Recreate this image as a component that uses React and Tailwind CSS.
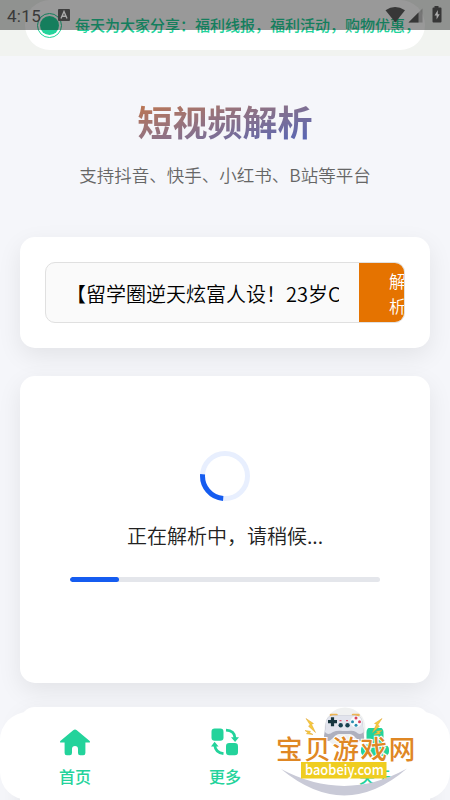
import React from 'react';

const HomeIcon = () => (
  <svg width="30" height="27" viewBox="0 0 30 27" fill="#23d39b">
    <path d="M13.2 1.2Q15 -.3 16.8 1.2L29.4 11.8Q31 13.6 28.6 13.6H25.4V24Q25.4 26.2 23.2 26.2H20.2Q18 26.2 18 24V20Q18 17 15 17Q12 17 12 20V24Q12 26.2 9.8 26.2H6.8Q4.6 26.2 4.6 24V13.6H1.4Q-1 13.6 .6 11.8Z" />
  </svg>
);

const MoreIcon = () => (
  <svg width="28" height="28" viewBox="0 0 28 28" fill="#23d39b">
    <rect x="0.5" y="0.5" width="12" height="12.2" rx="3.2" />
    <rect x="15" y="15" width="12" height="12.2" rx="3.2" />
    <path d="M15 2.2Q23.5 2.6 24 10M12.5 25.6Q4.5 24.6 3.8 17.5" fill="none" stroke="#23d39b" strokeWidth="2.7" />
    <path d="M20 9.3H28L24.1 14ZM0 18.5H7.6L3.6 13.8Z" />
  </svg>
);

const AboutIcon = () => (
  <svg width="28" height="28" viewBox="0 0 28 28" fill="#23d39b">
    <rect x="5.5" y="-1" width="17" height="17" rx="5" />
    <path d="M7 14H21V19H7Z" />
    <rect x="0" y="16.5" width="28" height="12" rx="5" />
  </svg>
);

const tabs = [
  { label: '首页', Icon: HomeIcon },
  { label: '更多', Icon: MoreIcon },
  { label: '关于', Icon: AboutIcon },
];

const StatusBar = () => (
  <div className="absolute inset-x-0 top-0 z-20 flex h-[30px] justify-between bg-black/40">
    <div className="flex pl-[7px]">
      <span className="w-[34px] font-['Roboto'] text-[17px] leading-[32px] tracking-[0.3px] text-[#3a3a3a]">4:15</span>
      <svg className="mt-[9px] ml-[17px]" width="12" height="12" viewBox="0 0 12 12">
        <rect width="12" height="12" rx="1" fill="#3f3f3f" />
        <path d="M3 9.5L6 2.5L9 9.5M4.2 7.2H7.8" fill="none" stroke="#aaa" strokeWidth="1.4" />
      </svg>
    </div>
    <svg width="65" height="30" viewBox="0 0 65 30" fill="#373737">
      <path d="M0.5 10.2Q10 3.8 20 10.2L10.3 22.5Z" />
      <path d="M37.5 8.5V22.5H23.5Z" opacity=".35" />
      <path d="M33.5 12.5V22.5H23.5Z" />
      <path d="M49.5 6H53.5V7.5H55.5Q56.5 7.5 56.5 8.5V21.5Q56.5 22.5 55.5 22.5H48.5Q47.5 22.5 47.5 21.5V8.5Q47.5 7.5 48.5 7.5H49.5Z" />
      <path d="M52.8 10L49.5 15.5H51.6V19.6L54.7 14.2H52.8Z" fill="#aaa" />
    </svg>
  </div>
);

const Watermark = () => (
  <svg className="pointer-events-none absolute top-[700px] left-[265px] z-30" width="160" height="100" viewBox="0 0 160 100">
    <circle cx="80" cy="28" r="20.5" fill="#f0f1f1" />
    <path d="M66 15H71.5M88 15H93.5" stroke="#edb553" strokeWidth="2.6" strokeLinecap="round" />
    <path d="M68 15.5Q62 15.5 61 22L59 36Q59 41 63 41C67 41 69 35 74 34H85C90 35 92 41 96 41Q100 41 99 36L97.5 22Q96.5 15.5 90 15.5Z" fill="#aeb0be" />
    <path d="M68 15.5Q62 15.5 61 22L60 32Q63 36 68 32Q72 30 78 31H83Q88 30 91 32Q95 36 98.5 32L97.5 22Q96.5 15.5 90 15.5Z" fill="#e2e4ed" />
    <path d="M67.5 17.2V26.2M63 21.7H72" stroke="#17353e" strokeWidth="3.2" />
    <circle cx="75.7" cy="25.3" r="2.2" fill="#17414f" />
    <circle cx="82.5" cy="25.3" r="2.2" fill="#17414f" />
    <path d="M74.5 20.7H76.5M81 20.7H83" stroke="#e0506a" strokeWidth="1.3" />
    <circle cx="91" cy="21.7" r="5.6" fill="#f9fafc" />
    <circle cx="91" cy="18" r="1.5" fill="#d8405e" />
    <circle cx="87.5" cy="21.7" r="1.5" fill="#268cae" />
    <circle cx="94.5" cy="21.7" r="1.5" fill="#d8405e" />
    <circle cx="91" cy="25.3" r="1.5" fill="#268cae" />
    <g fill="#f6ca3d" stroke="#e0a433" strokeWidth=".5">
      <path d="M41 18.5L48.5 23.5L46.5 24.3L50.5 32.5L43.5 26.2L45.2 25Z" />
      <path d="M117 18.5L109.5 23.5L111.5 24.3L107.5 32.5L114.5 26.2L112.8 25Z" />
      <path d="M40 30.5L45.5 31.3L44.5 32.5L48 34.5L41.5 33.8L42.7 32.5Z" />
      <path d="M117 30.5L111.5 31.3L112.5 32.5L109 34.5L115.5 33.8L114.3 32.5Z" />
    </g>
    <path d="M16 69Q80 103 142 68.5Q80 122 16 69Z" fill="#c9cad7" />
    <text x="11" y="58.7" fontSize="26.5" fontWeight="500" letterSpacing="1.7" fill="#df8724" stroke="#fff" strokeWidth="2" paintOrder="stroke">宝贝游戏网</text>
    <rect x="36" y="62" width="85.5" height="16.5" fill="#efcd20" />
    <text x="40" y="75" fontSize="14.5" fontWeight="500" fill="#fff" textLength="79" lengthAdjust="spacingAndGlyphs">baobeiy.com</text>
  </svg>
);

const App = () => {
  return (
    <div className="relative flex h-[800px] w-[450px] flex-col overflow-hidden bg-[#f5f6fa] font-['Noto_Sans_CJK_SC',sans-serif]">
      <StatusBar />

      <header className="h-[56px] shrink-0 bg-[#f1f3f0] pl-[25px]">
        <div className="flex h-[50px] w-[400px] items-center rounded-[25px] bg-white pl-[12px]">
          <span className="flex size-[25px] shrink-0 items-center justify-center rounded-full border-[1.5px] border-[#23d39b]">
            <span className="size-[19px] rounded-full bg-[#23d39b]" />
          </span>
          <span className="ml-[13px] text-[15px] font-medium whitespace-nowrap text-[#23d39b]">每天为大家分享：福利线报，福利活动，购物优惠，</span>
        </div>
      </header>

      <main className="flex flex-col px-5 text-center">
        <h1 className="mx-auto mt-[39px] bg-linear-to-br from-[#c8743a] to-[#4c61bd] bg-clip-text text-[35px] leading-[52px] font-bold text-transparent">短视频解析</h1>
        <p className="mt-[15px] text-[17.5px] leading-[26px] font-[350] text-[#666]">支持抖音、快手、小红书、B站等平台</p>

        <section className="mt-[49px] h-[111px] rounded-[15px] bg-white px-[25px] pt-[25px] shadow-[0_8px_25px_rgba(0,0,0,0.08)]">
          <div className="flex h-[61px] overflow-hidden rounded-[10px] border border-[#e0e0e0] bg-[#fafafa]">
            <div className="flex w-[313px] shrink-0 items-center pt-[2px] pr-[20px] pl-[20px]">
              <span className="w-[273px] overflow-hidden text-left text-[20px] leading-[30px] font-[350] whitespace-nowrap text-black">【留学圈逆天炫富人设！23岁CEO</span>
            </div>
            <button className="w-[76px] shrink-0 bg-[#e57300] pl-[30px] text-left text-[17px] leading-[25px] font-[350] text-white">
              <span className="block w-[17px]">解析</span>
            </button>
          </div>
        </section>

        <section className="mt-[28px] flex h-[307px] flex-col items-center rounded-[15px] bg-white px-[50px] pt-[75px] shadow-[0_8px_25px_rgba(0,0,0,0.08)]">
          <svg width="50" height="50" viewBox="0 0 50 50" fill="none" strokeWidth="5">
            <circle cx="25" cy="25" r="22.5" stroke="#e8effe" />
            <path d="M2.6 23.2A22.5 22.5 0 0 0 23.2 47.4" stroke="#155cf0" />
          </svg>
          <p className="mt-[20px] text-[20px] leading-[30px] font-[350] text-[#222]">正在解析中，请稍候...</p>
          <div className="mt-[26px] h-[5px] w-full overflow-hidden rounded-full bg-[#e4e6eb]">
            <div className="h-full w-[49px] rounded-full bg-[#155cf0]" />
          </div>
        </section>

        <section className="mt-[24px] h-[120px] rounded-[15px] bg-white shadow-[0_8px_25px_rgba(0,0,0,0.08)]" />
      </main>

      <nav className="absolute inset-x-0 bottom-0 z-10 flex h-[88px] rounded-[28px] bg-white">
        {tabs.map(({ label, Icon }) => (
          <div key={label} className="flex flex-1 flex-col items-center pt-[16px]">
            <span className="flex h-[28px] items-center">
              <Icon />
            </span>
            <span className="mt-[8px] text-[16px] leading-[24px] font-medium text-[#23d39b]">{label}</span>
          </div>
        ))}
      </nav>

      <Watermark />
    </div>
  );
};

export default App;
